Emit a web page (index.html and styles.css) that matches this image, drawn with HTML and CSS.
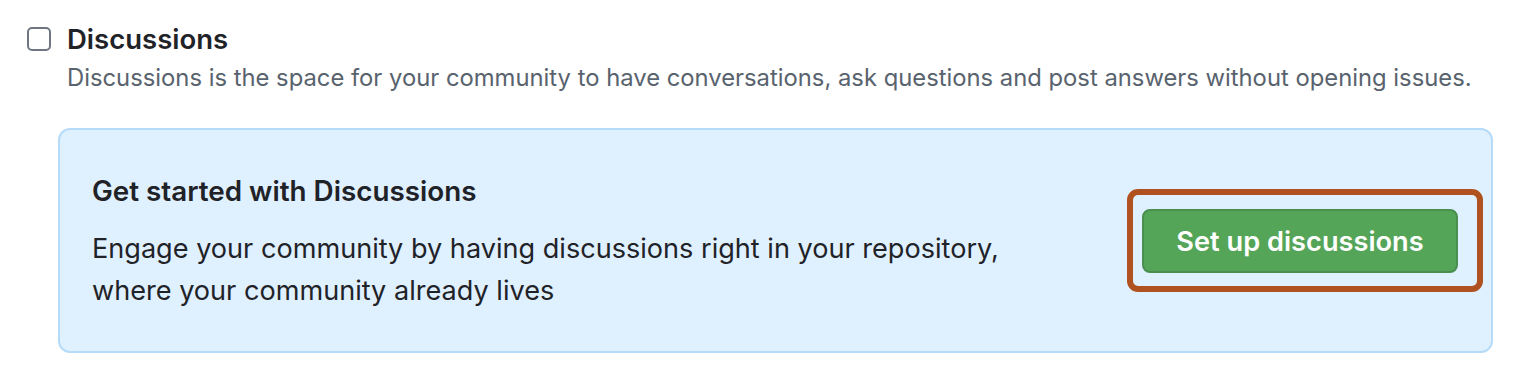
FILE: index.html
```html
<html lang="en">
<head>
    <meta charset="UTF-8">
    <title>Discussions</title>
    <link rel="stylesheet" href="styles.css">
</head>
<body>
<div class="feature">
    <div class="feature-head">
        <span class="checkbox"></span>
        <h3 class="feature-title">Discussions</h3>
    </div>
    <p class="feature-desc">Discussions is the space for your community to have conversations, ask questions and post answers without opening issues.</p>

    <div class="promo">
        <div class="promo-text">
            <h4 class="promo-title">Get started with Discussions</h4>
            <p class="promo-body">Engage your community by having discussions right in your repository,<br>where your community already lives</p>
        </div>
        <div class="highlight">
            <button class="btn-primary" type="button">Set up discussions</button>
        </div>
    </div>
</div>
</body>
</html>
```

FILE: styles.css
```css
body {
    margin: 0;
    background: #ffffff;
    font-family: Inter, "Liberation Sans", Arial, sans-serif;
    color: #1f2328;
}

.feature {
    padding: 23px 0 0 27px;
}

.feature-head {
    display: flex;
    align-items: center;
    gap: 16px;
}

.checkbox {
    box-sizing: border-box;
    width: 24px;
    height: 24px;
    border: 2px solid #6e7781;
    border-radius: 5px;
    background: #ffffff;
}

.feature-title {
    margin: 0;
    font-size: 27.5px;
    font-weight: 600;
    line-height: 32px;
}

.feature-desc {
    margin: 8px 0 0 40px;
    font-size: 23.8px;
    line-height: 30px;
    color: #59636e;
}

.promo {
    box-sizing: border-box;
    display: flex;
    align-items: center;
    justify-content: space-between;
    width: 1435px;
    height: 225px;
    margin: 35px 0 0 31px;
    padding: 0 8px 0 32px;
    background: #dff0ff;
    border: 2px solid #b6dbf9;
    border-radius: 12px;
}

.promo-text {
    padding-top: 5px;
}

.promo-title {
    margin: 0 0 20px;
    font-size: 27.8px;
    font-weight: 600;
    line-height: 34px;
}

.promo-body {
    margin: 0;
    font-size: 27.1px;
    line-height: 42px;
}

.highlight {
    flex-shrink: 0;
    padding: 14px 19px 13px 9px;
    border: 6px solid #b0521f;
    border-radius: 11px;
}

.btn-primary {
    display: block;
    width: 316px;
    height: 64px;
    background: #55a559;
    border: 2px solid #4a8f4e;
    border-radius: 8px;
    color: #ffffff;
    font-family: Inter, "Liberation Sans", Arial, sans-serif;
    font-size: 27.2px;
    font-weight: 600;
}
```
